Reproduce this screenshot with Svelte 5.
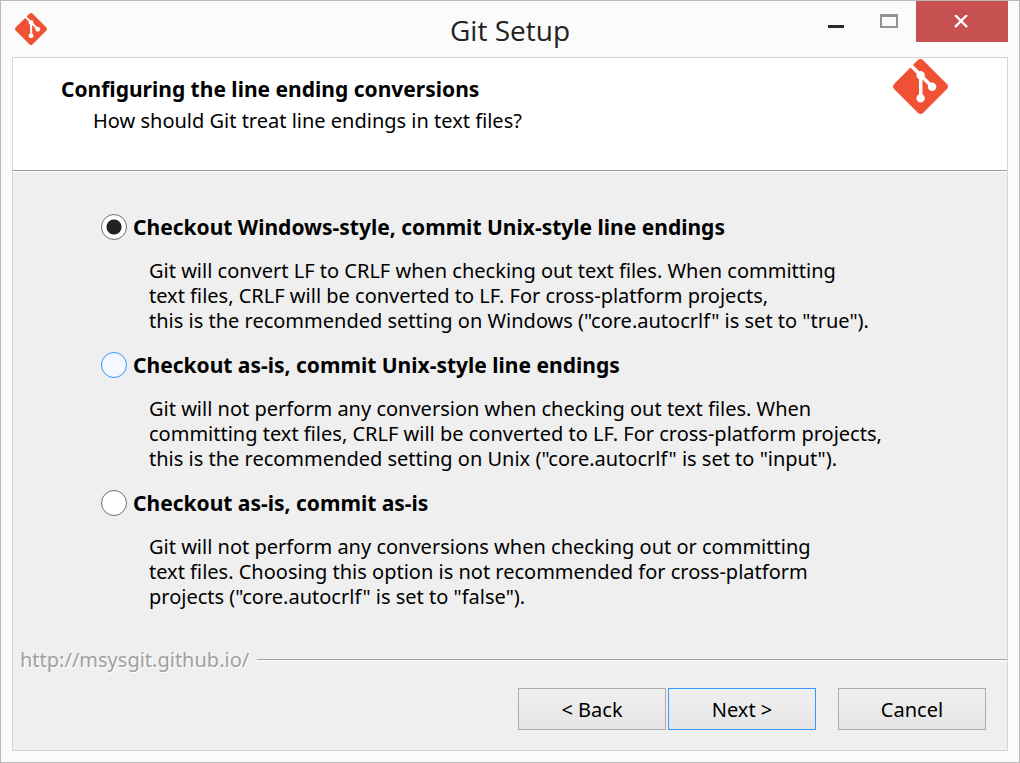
<script lang="ts">
	const options = [
		{
			value: 'true',
			title: 'Checkout Windows-style, commit Unix-style line endings',
			lines: [
				'Git will convert LF to CRLF when checking out text files. When committing',
				'text files, CRLF will be converted to LF. For cross-platform projects,',
				'this is the recommended setting on Windows ("core.autocrlf" is set to "true").'
			]
		},
		{
			value: 'input',
			title: 'Checkout as-is, commit Unix-style line endings',
			lines: [
				'Git will not perform any conversion when checking out text files. When',
				'committing text files, CRLF will be converted to LF. For cross-platform projects,',
				'this is the recommended setting on Unix ("core.autocrlf" is set to "input").'
			]
		},
		{
			value: 'false',
			title: 'Checkout as-is, commit as-is',
			lines: [
				'Git will not perform any conversions when checking out or committing',
				'text files. Choosing this option is not recommended for cross-platform',
				'projects ("core.autocrlf" is set to "false").'
			]
		}
	];

	let selected = $state('true');
	let highlighted = $state('input');
</script>

{#snippet gitLogo(size: number)}
	<svg width={size} height={size} viewBox="0 0 24 24" aria-hidden="true">
		<path
			fill="#f05033"
			d="M23.546 10.93L13.067.452c-.604-.603-1.582-.603-2.188 0L8.708 2.627l2.76 2.76c.645-.215 1.379-.07 1.889.441.516.515.658 1.258.438 1.9l2.658 2.66c.645-.223 1.387-.078 1.9.435.721.72.721 1.884 0 2.604-.719.719-1.881.719-2.6 0-.539-.541-.674-1.337-.404-1.996L12.86 8.955v6.525c.176.086.342.203.488.348.713.721.713 1.883 0 2.6-.719.721-1.889.721-2.609 0-.719-.719-.719-1.879 0-2.598.182-.18.387-.316.605-.406V8.835c-.217-.091-.424-.222-.6-.401-.545-.545-.676-1.342-.396-2.009L7.636 3.7.45 10.881c-.6.605-.6 1.584 0 2.189l10.48 10.477c.604.604 1.582.604 2.186 0l10.43-10.43c.605-.603.605-1.582 0-2.187"
		/>
	</svg>
{/snippet}

<div class="window">
	<header class="titlebar">
		<div class="app-icon">{@render gitLogo(32)}</div>
		<h1>Git Setup</h1>
		<div class="controls">
			<button type="button" aria-label="Minimize">
				<svg width="18" height="14" viewBox="0 0 18 14">
					<path fill="#2a2a2a" d="M0 10h16v3H0z" />
				</svg>
			</button>
			<button type="button" aria-label="Maximize" disabled>
				<svg width="20" height="16" viewBox="0 0 20 16">
					<path fill="#939393" fill-rule="evenodd" d="M0 0h18v14H0zM2 3v9h14V3z" />
				</svg>
			</button>
			<button type="button" class="close" aria-label="Close">
				<svg width="16" height="14" viewBox="0 0 16 14">
					<path fill="none" stroke="#fff" stroke-width="2.4" d="M1 0l12 12M13 0L1 12" />
				</svg>
			</button>
		</div>
	</header>

	<main>
		<div class="intro">
			<div>
				<h2>Configuring the line ending conversions</h2>
				<p>How should Git treat line endings in text files?</p>
			</div>
			{@render gitLogo(55)}
		</div>

		<div class="options" role="radiogroup" aria-label="Line ending conversions">
			{#each options as option}
				<div class="option">
					<label>
						<input
							type="radio"
							name="autocrlf"
							class:hot={highlighted === option.value}
							value={option.value}
							bind:group={selected}
							onmouseenter={() => (highlighted = option.value)}
						/>
						{option.title}
					</label>
					<p>
						{#each option.lines as line}
							<span>{line}</span>
						{/each}
					</p>
				</div>
			{/each}
		</div>

		<div class="branding">
			<span>http://msysgit.github.io/</span>
			<hr />
		</div>

		<footer>
			<button type="button">&lt; Back</button>
			<button type="button" class="default">Next &gt;</button>
			<button type="button" class="cancel">Cancel</button>
		</footer>
	</main>
</div>

<style>
	:global(body) {
		margin: 0;
	}

	.window {
		box-sizing: border-box;
		display: flex;
		flex-direction: column;
		min-height: 100vh;
		padding: 0 11px 11px;
		border: 1px solid #bababa;
		background: #fbfbfb;
		color: #000;
		font-family: Tahoma, 'Noto Sans', sans-serif;
		font-size: 20px;
		line-height: 25px;
	}

	h1,
	h2,
	p {
		margin: 0;
	}

	svg {
		display: block;
	}

	.titlebar {
		display: grid;
		grid-template-columns: 1fr auto 1fr;
		height: 56px;
	}

	.app-icon {
		padding: 12px 3px;
	}

	h1 {
		padding-top: 9px;
		color: #222;
		font-family: 'Segoe UI', 'Open Sans', sans-serif;
		font-size: 28px;
		font-weight: normal;
		line-height: 40px;
	}

	.controls {
		display: flex;
		justify-content: flex-end;
		height: 41px;
	}

	.controls button {
		display: flex;
		align-items: center;
		justify-content: center;
		width: 53px;
		padding: 0;
		border: 0;
		background: none;
	}

	.controls .close {
		width: 92px;
		background: #c75050;
	}

	main {
		display: flex;
		flex: 1;
		flex-direction: column;
		border: 1px solid #d5d5d5;
		background: #efefef;
	}

	.intro {
		display: flex;
		justify-content: space-between;
		box-sizing: border-box;
		height: 113px;
		padding: 1px 59px 0 48px;
		border-bottom: 1px solid #999;
		background: #fff;
		box-shadow: 0 1px #fff;
	}

	h2 {
		padding: 18px 0 6px;
		font-size: 21px;
		line-height: 25px;
	}

	.intro p {
		padding-left: 32px;
	}

	.options {
		display: flex;
		flex: 1;
		flex-direction: column;
		gap: 19px;
		padding: 43px 88px 36px;
	}

	label {
		display: flex;
		align-items: center;
		gap: 6px;
		height: 26px;
		font-size: 21px;
		font-weight: bold;
	}

	input {
		flex: none;
		width: 26px;
		height: 26px;
		margin: 0;
		border: 1px solid #707070;
		border-radius: 50%;
		background: #fff;
		appearance: none;
	}

	input:checked {
		background: radial-gradient(circle, #222 7px, #fff 8px);
	}

	input.hot {
		border-color: #3399ff;
		background-color: #f3f9ff;
	}

	.option p {
		padding: 18px 0 0 48px;
	}

	.option span {
		display: block;
	}

	.branding {
		display: flex;
		align-items: center;
		gap: 8px;
		padding-left: 7px;
		color: #a0a0a0;
		line-height: 24px;
		text-shadow: 1px 1px #fff;
	}

	hr {
		flex: 1;
		height: 1px;
		margin: 0;
		border: 0;
		border-top: 1px solid #a0a0a0;
		background: #fff;
	}

	footer {
		display: flex;
		justify-content: flex-end;
		gap: 2px;
		padding: 16px 21px 20px;
	}

	footer button {
		width: 148px;
		height: 42px;
		padding: 0;
		border: 1px solid #acacac;
		background: linear-gradient(#f0f0f0, #e5e5e5);
		color: #000;
		font: inherit;
	}

	footer .default {
		border-color: #3399ff;
	}

	footer .cancel {
		margin-left: 20px;
	}
</style>
